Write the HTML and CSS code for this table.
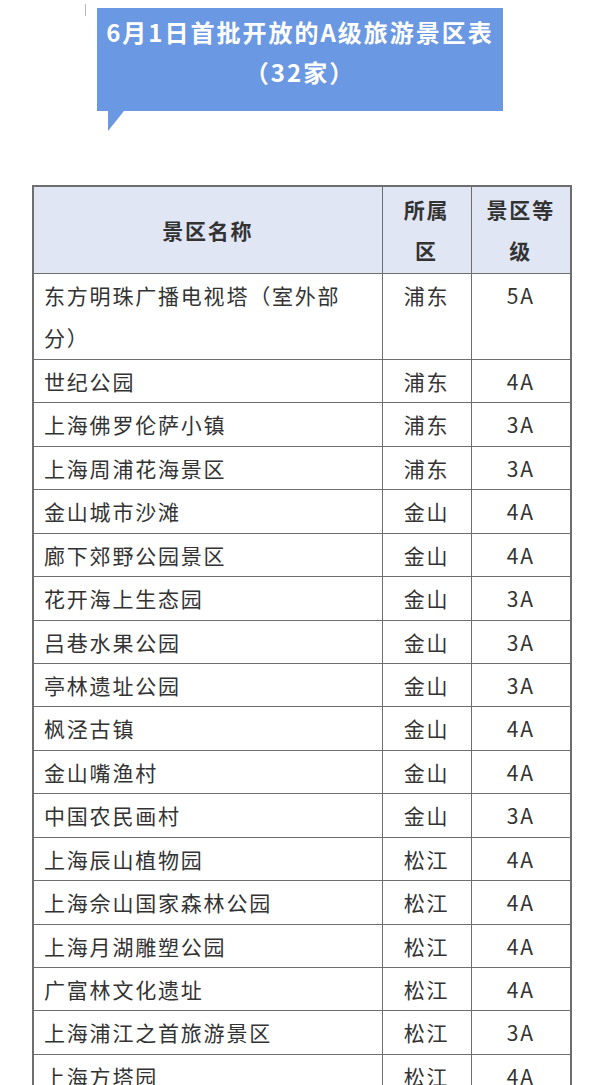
FILE: index.html
```html
<!DOCTYPE html>
<html lang="zh-CN">
<head>
<meta charset="utf-8">
<title>6月1日首批开放的A级旅游景区表</title>
<link rel="stylesheet" href="styles.css">
</head>
<body>
<div class="page">
  <div class="title-wrap">
    <span class="tick"></span>
    <div class="title-box">
      <p class="title">6月1日首批开放的A级旅游景区表<br>（32家）</p>
      <span class="tail"></span>
    </div>
  </div>

  <table class="spots">
    <colgroup>
      <col class="c-name">
      <col class="c-dist">
      <col class="c-level">
    </colgroup>
    <thead>
      <tr><th>景区名称</th><th class="narrow">所属区</th><th class="narrow">景区等级</th></tr>
    </thead>
    <tbody>
      <tr><td class="name">东方明珠广播电视塔（室外部分）</td><td>浦东</td><td>5A</td></tr>
      <tr><td class="name">世纪公园</td><td>浦东</td><td>4A</td></tr>
      <tr><td class="name">上海佛罗伦萨小镇</td><td>浦东</td><td>3A</td></tr>
      <tr><td class="name">上海周浦花海景区</td><td>浦东</td><td>3A</td></tr>
      <tr><td class="name">金山城市沙滩</td><td>金山</td><td>4A</td></tr>
      <tr><td class="name">廊下郊野公园景区</td><td>金山</td><td>4A</td></tr>
      <tr><td class="name">花开海上生态园</td><td>金山</td><td>3A</td></tr>
      <tr><td class="name">吕巷水果公园</td><td>金山</td><td>3A</td></tr>
      <tr><td class="name">亭林遗址公园</td><td>金山</td><td>3A</td></tr>
      <tr><td class="name">枫泾古镇</td><td>金山</td><td>4A</td></tr>
      <tr><td class="name">金山嘴渔村</td><td>金山</td><td>4A</td></tr>
      <tr><td class="name">中国农民画村</td><td>金山</td><td>3A</td></tr>
      <tr><td class="name">上海辰山植物园</td><td>松江</td><td>4A</td></tr>
      <tr><td class="name">上海佘山国家森林公园</td><td>松江</td><td>4A</td></tr>
      <tr><td class="name">上海月湖雕塑公园</td><td>松江</td><td>4A</td></tr>
      <tr><td class="name">广富林文化遗址</td><td>松江</td><td>4A</td></tr>
      <tr><td class="name">上海浦江之首旅游景区</td><td>松江</td><td>3A</td></tr>
      <tr><td class="name">上海方塔园</td><td>松江</td><td>4A</td></tr>
    </tbody>
  </table>
</div>
</body>
</html>
```

FILE: styles.css
```css
html, body {
  margin: 0;
  padding: 0;
  background: #ffffff;
}

.page {
  width: 600px;
  font-family: "Noto Sans CJK SC", "Noto Sans", sans-serif;
  color: #333333;
}

.title-wrap {
  position: relative;
  padding-top: 8px;
  height: 185px;
  box-sizing: border-box;
}

.tick {
  position: absolute;
  left: 85px;
  top: 4px;
  width: 1px;
  height: 12px;
  background: #b8b8b8;
}

.title-box {
  position: relative;
  width: 406px;
  margin: 0 auto 0 97px;
  background: #6b98e2;
  padding: 4px 0 18px;
  box-sizing: border-box;
  height: 103px;
}

.title {
  margin: 0;
  text-align: center;
  color: #ffffff;
  font-weight: 700;
  font-size: 24px;
  line-height: 40px;
  letter-spacing: 2px;
}

.tail {
  position: absolute;
  left: 11px;
  top: 103px;
  width: 0;
  height: 0;
  border-top: 20px solid #6b98e2;
  border-right: 16px solid transparent;
}

.spots {
  margin-left: 32px;
  width: 538px;
  border-collapse: collapse;
  table-layout: fixed;
  border: 2px solid #6e6e6e;
  font-size: 21px;
  letter-spacing: 1.8px;
}

.c-name { width: 349px; }
.c-dist { width: 89px; }
.c-level { width: 100px; }

.spots th {
  background: #e1e6f5;
  font-weight: 700;
  color: #333333;
  line-height: 41px;
  padding: 2px 10px 2px;
  border: 1px solid #6e6e6e;
  text-align: center;
}

.spots td {
  border: 1px solid #6e6e6e;
  line-height: 42.44px;
  padding: 0 10px;
  text-align: center;
  vertical-align: top;
  color: #333333;
}

.spots td.name {
  text-align: left;
  padding: 0 30px 0 10px;
}
```
